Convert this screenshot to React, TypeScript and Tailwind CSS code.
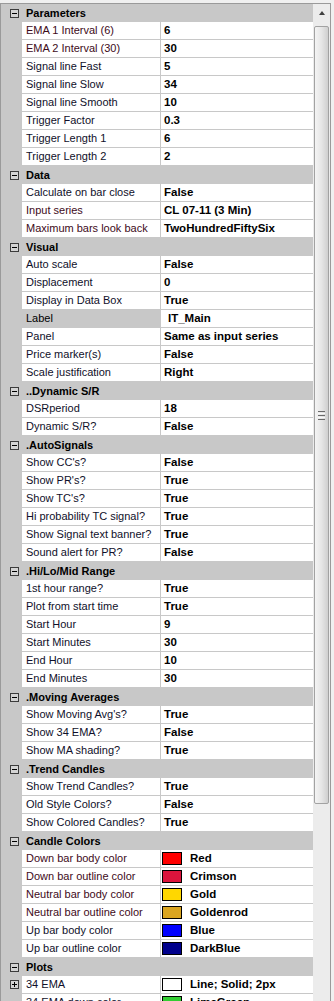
type Prop = {
  name: string;
  value: string;
  swatch?: string;
  maroon?: boolean;
  expand?: boolean;
  selected?: boolean;
};

type Category = { title: string; props: Prop[] };

const categories: Category[] = [
  {
    title: "Parameters",
    props: [
      { name: "EMA 1 Interval (6)", value: "6", maroon: true },
      { name: "EMA 2 Interval (30)", value: "30", maroon: true },
      { name: "Signal line Fast", value: "5" },
      { name: "Signal line Slow", value: "34" },
      { name: "Signal line Smooth", value: "10" },
      { name: "Trigger Factor", value: "0.3" },
      { name: "Trigger Length 1", value: "6" },
      { name: "Trigger Length 2", value: "2" },
    ],
  },
  {
    title: "Data",
    props: [
      { name: "Calculate on bar close", value: "False" },
      { name: "Input series", value: "CL 07-11 (3 Min)", maroon: true },
      { name: "Maximum bars look back", value: "TwoHundredFiftySix", maroon: true },
    ],
  },
  {
    title: "Visual",
    props: [
      { name: "Auto scale", value: "False" },
      { name: "Displacement", value: "0" },
      { name: "Display in Data Box", value: "True" },
      { name: "Label", value: "IT_Main", selected: true },
      { name: "Panel", value: "Same as input series" },
      { name: "Price marker(s)", value: "False" },
      { name: "Scale justification", value: "Right" },
    ],
  },
  {
    title: "..Dynamic S/R",
    props: [
      { name: "DSRperiod", value: "18" },
      { name: "Dynamic S/R?", value: "False" },
    ],
  },
  {
    title: ".AutoSignals",
    props: [
      { name: "Show CC's?", value: "False" },
      { name: "Show PR's?", value: "True" },
      { name: "Show TC's?", value: "True" },
      { name: "Hi probability TC signal?", value: "True" },
      { name: "Show Signal text banner?", value: "True" },
      { name: "Sound alert for PR?", value: "False" },
    ],
  },
  {
    title: ".Hi/Lo/Mid Range",
    props: [
      { name: "1st hour range?", value: "True" },
      { name: "Plot from start time", value: "True" },
      { name: "Start Hour", value: "9" },
      { name: "Start Minutes", value: "30" },
      { name: "End Hour", value: "10" },
      { name: "End Minutes", value: "30" },
    ],
  },
  {
    title: ".Moving Averages",
    props: [
      { name: "Show Moving Avg's?", value: "True" },
      { name: "Show 34 EMA?", value: "False" },
      { name: "Show MA shading?", value: "True" },
    ],
  },
  {
    title: ".Trend Candles",
    props: [
      { name: "Show Trend Candles?", value: "True" },
      { name: "Old Style Colors?", value: "False" },
      { name: "Show Colored Candles?", value: "True" },
    ],
  },
  {
    title: "Candle Colors",
    props: [
      { name: "Down bar body color", value: "Red", swatch: "bg-[#ff0000]", maroon: true },
      { name: "Down bar outline color", value: "Crimson", swatch: "bg-[#dc143c]", maroon: true },
      { name: "Neutral bar body color", value: "Gold", swatch: "bg-[#ffd700]", maroon: true },
      { name: "Neutral bar outline color", value: "Goldenrod", swatch: "bg-[#daa520]", maroon: true },
      { name: "Up bar body color", value: "Blue", swatch: "bg-[#0000ff]" },
      { name: "Up bar outline color", value: "DarkBlue", swatch: "bg-[#00008b]" },
    ],
  },
  {
    title: "Plots",
    props: [
      { name: "34 EMA", value: "Line; Solid; 2px", swatch: "bg-white", expand: true },
      { name: "34 EMA down color", value: "LimeGreen", swatch: "bg-[#32cd32]" },
    ],
  },
];

function ToggleBox({ plus }: { plus?: boolean }) {
  return (
    <div className="relative h-[9px] w-[9px] border border-[#3c3c3c] bg-[#d4d4d4]">
      <div className="absolute left-[1px] top-[3px] h-px w-[5px] bg-black" />
      {plus && <div className="absolute left-[3px] top-[1px] h-[5px] w-px bg-black" />}
    </div>
  );
}

function CategoryRow({ title }: { title: string }) {
  return (
    <div className="flex h-[18px] items-center">
      <div className="flex w-[25px] shrink-0 justify-start pl-[9px]">
        <ToggleBox />
      </div>
      <span className="text-[11px] font-bold text-black">{title}</span>
    </div>
  );
}

function PropRow({ p }: { p: Prop }) {
  return (
    <div className="flex h-[18px] pb-px">
      <div className="flex w-[21px] shrink-0 items-center pl-[9px]">
        {p.expand && <ToggleBox plus />}
      </div>
      <div
        className={`flex w-[138px] shrink-0 items-center overflow-hidden whitespace-nowrap pl-[4px] text-[11px] ${
          p.selected ? "bg-[#c8c8c8] text-black" : "bg-white"
        } ${p.maroon ? "text-[#3e0b1a]" : p.selected ? "" : "text-[#10102a]"}`}
      >
        {p.name}
      </div>
      <div className="ml-px flex flex-1 items-center whitespace-nowrap bg-white text-[11.5px] font-bold text-black">
        {p.swatch ? (
          <>
            <div className={`ml-[1px] h-[13px] w-[20px] border border-black ${p.swatch}`} />
            <span className="ml-[8px]">{p.value}</span>
          </>
        ) : (
          <span className={p.selected ? "pl-[7px]" : "pl-[3px]"}>{p.value}</span>
        )}
      </div>
    </div>
  );
}

function ScrollBar() {
  return (
    <div className="flex w-[17px] shrink-0 flex-col bg-[#ececec]">
      <div className="flex h-[18px] items-center justify-center">
        <div className="h-0 w-0 border-x-[3px] border-b-[4px] border-x-transparent border-b-[#404040]" />
      </div>
      <div className="mx-[1px] mt-[4px] flex h-[778px] items-center justify-center rounded-[2px] border border-[#a2a2a2] bg-linear-to-r from-[#f4f4f4] via-[#e6e6e6] to-[#cfcfcf]">
        <div className="flex flex-col gap-[1px]">
          <div className="h-px w-[7px] bg-[#6a6a6a]" />
          <div className="h-px w-[7px] bg-[#f8f8f8]" />
          <div className="h-px w-[7px] bg-[#6a6a6a]" />
          <div className="h-px w-[7px] bg-[#f8f8f8]" />
          <div className="h-px w-[7px] bg-[#6a6a6a]" />
        </div>
      </div>
    </div>
  );
}

export default function App() {
  return (
    <div
      className="h-[1001px] w-[334px] overflow-hidden bg-[#f0f0f0] pt-[3px] pr-[3px]"
      style={{ fontFamily: '"Liberation Sans", Arial, sans-serif' }}
    >
      <div className="flex h-full border-l border-t border-r border-[#9a9a9a]">
        <div className="flex-1 bg-[#c8c8c8]">
          {categories.map((c) => (
            <div key={c.title}>
              <CategoryRow title={c.title} />
              {c.props.map((p) => (
                <PropRow key={p.name} p={p} />
              ))}
            </div>
          ))}
        </div>
        <ScrollBar />
      </div>
    </div>
  );
}
